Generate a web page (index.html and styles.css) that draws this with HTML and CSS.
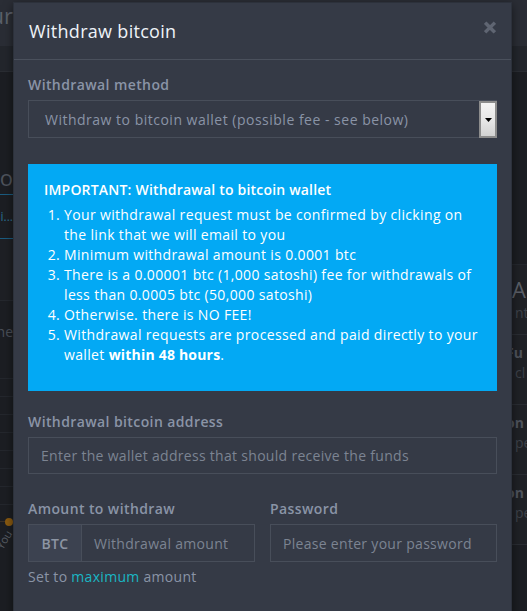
FILE: index.html
```html
<!DOCTYPE html>
<html lang="en">
<head>
<meta charset="utf-8">
<title>Withdraw bitcoin</title>
<link rel="stylesheet" href="styles.css">
</head>
<body>
<div class="page">
  <div class="topbar">
    <div class="edge-left"><span class="tb-title">Your</span></div>
    <div class="edge-fill"></div>
  </div>
  <div class="subbar"></div>
  <div class="main">
    <div class="col-left">
      <div class="lc-space"></div>
      <div class="lc-head"><span>Crypto</span></div>
      <div class="lc-tab"><span>Bi...</span></div>
      <div class="lc-row"></div>
      <div class="lc-text"><span>the</span></div>
      <div class="lc-grid"></div>
      <div class="lc-chart"><span class="dot"></span><span class="rot">You</span></div>
    </div>
    <div class="col-mid"></div>
    <div class="col-right">
      <div class="rc-dark"></div>
      <div class="rc-card"><div class="rc-big">A</div><div class="rc-sub">nt</div></div>
      <div class="rc-card"><div class="rc-bold">Fu</div><div class="rc-sub">cl</div></div>
      <div class="rc-card"><div class="rc-bold">on</div><div class="rc-sub">pe</div></div>
      <div class="rc-card"><div class="rc-bold">on</div><div class="rc-sub">pe</div></div>
    </div>
  </div>
</div>

<div class="modal">
  <div class="modal-header">
    <h4 class="modal-title">Withdraw bitcoin</h4>
    <svg class="close" width="12" height="13" viewBox="0 0 12 13" aria-hidden="true">
      <path d="M2.3 2.8 L9.7 10.2 M9.7 2.8 L2.3 10.2" stroke="#5f6572" stroke-width="3.4" stroke-linecap="square" fill="none"/>
    </svg>
  </div>
  <div class="modal-body">
    <div class="group">
      <label class="label">Withdrawal method</label>
      <div class="select">
        <span class="select-text">Withdraw to bitcoin wallet (possible fee - see below)</span>
        <span class="select-btn"><svg width="7" height="4" viewBox="0 0 7 4"><path d="M0 0 H7 L3.5 4 Z" fill="#000"/></svg></span>
      </div>
    </div>

    <div class="info">
      <div class="info-title">IMPORTANT: Withdrawal to bitcoin wallet</div>
      <ol class="info-list">
        <li>Your withdrawal request must be confirmed by clicking on the link that we will email to you</li>
        <li>Minimum withdrawal amount is 0.0001 btc</li>
        <li>There is a 0.00001 btc (1,000 satoshi) fee for withdrawals of less than 0.0005 btc (50,000 satoshi)</li>
        <li>Otherwise. there is NO FEE!</li>
        <li>Withdrawal requests are processed and paid directly to your wallet <strong>within 48 hours</strong>.</li>
      </ol>
    </div>

    <div class="group">
      <label class="label">Withdrawal bitcoin address</label>
      <div class="input"><span class="ph">Enter the wallet address that should receive the funds</span></div>
    </div>

    <div class="row">
      <div class="group">
        <label class="label">Amount to withdraw</label>
        <div class="input-group">
          <span class="addon">BTC</span>
          <span class="ph ig-input">Withdrawal amount</span>
        </div>
        <div class="help">Set to <a class="link">maximum</a> amount</div>
      </div>
      <div class="group">
        <label class="label">Password</label>
        <div class="input"><span class="ph">Please enter your password</span></div>
      </div>
    </div>
  </div>
</div>
</body>
</html>
```

FILE: styles.css
```css
* { box-sizing: border-box; }
html, body { margin: 0; padding: 0; }
body {
  width: 527px;
  height: 611px;
  overflow: hidden;
  background: #1c1e23;
  font-family: "Open Sans", "Liberation Sans", sans-serif;
  position: relative;
}

/* background page (dimmed) */
.page { width: 527px; height: 611px; display: flex; flex-direction: column; }
.topbar { height: 47px; background: #2a2d35; display: flex; border-bottom: 1px solid #23262c; }
.edge-left { width: 13px; overflow: hidden; display: flex; justify-content: flex-end; align-items: center; }
.tb-title { font-size: 22px; color: #5c616b; white-space: nowrap; padding-bottom: 16px; }
.edge-fill { flex: 1; }
.subbar { height: 25px; background: #23262c; border-bottom: 1px solid #2a2d33; }
.main { flex: 1; display: flex; }
.col-left { width: 13px; overflow: hidden; display: flex; flex-direction: column; }
.lc-space { height: 92px; }
.lc-head { height: 26px; display: flex; justify-content: flex-end; font-size: 22px; color: #4e535c; white-space: nowrap; line-height: 26px; }
.lc-tab { height: 45px; border-top: 1px solid #1b5c80; border-bottom: 1px solid #1b5c80; display: flex; justify-content: flex-end; align-items: center; font-size: 12px; color: #2a6c8f; white-space: nowrap; margin-top: 4px; }
.lc-row { height: 62px; border-bottom: 1px solid #25282e; background: #1e2025; }
.lc-text { height: 60px; display: flex; justify-content: flex-end; align-items: center; font-size: 14px; color: #4a4f58; white-space: nowrap; }
.lc-grid { height: 160px; background: repeating-linear-gradient(#1c1e23 0 17px, #24272d 17px 18px); }
.lc-chart { flex: 1; position: relative; border-top: 1px solid #3a3026; }
.dot { position: absolute; left: 5px; top: -4px; width: 8px; height: 8px; border-radius: 50%; background: #8a5a10; }
.rot { position: absolute; left: -6px; top: 10px; transform: rotate(-60deg); font-size: 11px; color: #5a5e66; }
.col-mid { flex: 1; }
.col-right { width: 15px; overflow: hidden; display: flex; flex-direction: column; }
.rc-dark { height: 193px; border-bottom: 1px solid #25282e; }
.rc-card { height: 70px; background: #1f2126; border-bottom: 1px solid #2a2d33; padding: 8px 0 0 0; white-space: nowrap; }
.rc-big { font-size: 22px; color: #5a5f68; line-height: 28px; margin-top: 2px; }
.rc-bold { font-size: 14px; font-weight: 700; color: #4e535c; line-height: 20px; margin-left: -6px; }
.rc-sub { font-size: 14px; color: #3d424a; line-height: 20px; margin-left: 3px; }

/* modal */
.modal {
  position: absolute;
  top: 2px;
  left: 13px;
  width: 499px;
  height: 620px;
  background: #353a46;
  border: 1px solid #2c313b;
  box-shadow: 0 3px 9px rgba(0,0,0,0.5);
}
.modal-header {
  height: 57px;
  padding: 0 15px;
  display: flex;
  align-items: center;
  justify-content: space-between;
  border-bottom: 1px solid #4a505c;
}
.modal-title {
  margin: 0;
  font-size: 18px;
  font-weight: 400;
  color: #eef2f8;
  letter-spacing: 0.3px;
  margin-top: -1px;
}
.close { margin-right: 0px; margin-top: -8px; }
.modal-body { padding: 15px 14px 0 14px; }
.group { display: flex; flex-direction: column; }
.label {
  font-size: 14px;
  font-weight: 600;
  line-height: 20px;
  color: #8a94a6;
  margin-bottom: 5px;
  letter-spacing: 0.4px;
}
.select {
  height: 38px;
  border: 1px solid #484e5a;
  display: flex;
  align-items: center;
  justify-content: space-between;
  padding: 0 0 0 16px;
}
.select-text { font-size: 14px; color: #8a94a6; white-space: nowrap; letter-spacing: 0.5px; }
.select-btn {
  width: 18px;
  height: 37px;
  margin-top: 1px;
  margin-right: -1px;
  border: 2px solid #8c8c8c;
  background: linear-gradient(#f4f4f4, #e6e6e6 55%, #d2d2d2);
  display: flex;
  align-items: center;
  justify-content: center;
}
.info {
  margin-top: 26px;
  background: #03a9f4;
  color: #ffffff;
  padding: 16px 16px 25px 16px;
  height: 227px;
}
.info-title { font-size: 14px; font-weight: 600; line-height: 20px; margin-bottom: 5px; letter-spacing: 0.2px; }
.info-list { margin: 0; padding-left: 20px; font-size: 14px; line-height: 20px; letter-spacing: 0.35px; }
.info-list strong { font-weight: 700; letter-spacing: 0.2px; }
.info + .group { margin-top: 21px; }
.input {
  height: 37px;
  border: 1px solid #484e5a;
  display: flex;
  align-items: center;
  padding: 0 12px;
}
.ph { font-size: 14px; color: #7c8492; white-space: nowrap; letter-spacing: 0.3px; }
.row {
  margin-top: 25px;
  display: grid;
  grid-template-columns: 1fr 1fr;
  column-gap: 15px;
}
.input-group {
  height: 38px;
  border: 1px solid #484e5a;
  display: flex;
  align-items: stretch;
}
.addon {
  width: 53px;
  background: #3c4250;
  border-right: 1px solid #484e5a;
  font-size: 14px;
  font-weight: 600;
  color: #8d95a3;
  display: flex;
  align-items: center;
  justify-content: center;
  letter-spacing: 0.3px;
}
.ig-input { display: flex; align-items: center; padding-left: 12px; }
.row .input { height: 38px; }
.help { margin-top: 5px; font-size: 14px; line-height: 20px; color: #8a94a6; letter-spacing: 0.3px; }
.link { color: #1ab6c4; }
```
